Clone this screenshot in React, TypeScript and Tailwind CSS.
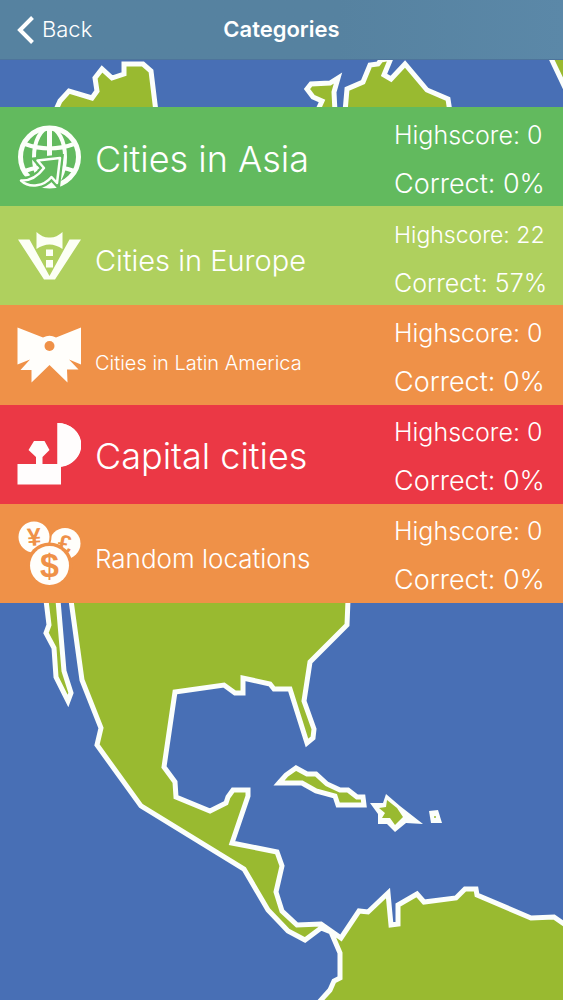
import type { ReactNode } from "react";

function WorldMap() {
  return (
    <svg
      className="absolute inset-0 h-full w-full"
      viewBox="0 0 563 1000"
      preserveAspectRatio="xMidYMin slice"
      aria-hidden="true"
    >
      <rect width="563" height="1000" fill="#486fb5" />
      <g fill="#99ba30" stroke="#fbfefb" strokeWidth="5">
        <path d="M55 112 60 101 69 91 92 98 97 91 95 78 102 69 112 78 124 74V64H143L151 71 156 112Z" />
        <path d="M317 112 322 101 313 97 307 89 311 84 330 83 338 78 334 92 335 112Z" />
        <path d="M345 112 347 89 363 82 370 65 378 64 381 60 391 58 384 75 391 79 405 64 427 90 448 99 450 112Z" />
        <path d="M549 54 570 98V50Z" />
        <path d="M46 600 49 625 46 633 54 648 56 677 68 701 71 693 64 671 58 600Z" />
        <path d="M340 953 331 932 321 928 305 940 288 931 268 910 244 869 141 806 97 745 101 728 82 680 71 600H348L347 625 310 662 304 701 314 729 313 738 307 743 290 689H274L270 684 243 678V693H235L224 685 175 692 164 767 175 782 176 797 210 811 226 803 228 797 233 790H248V796L232 843 277 852 282 866 276 892 282 911 297 925 321 924 341 938 359 911 368 912 388 893 391 925 398 924V905L417 894 424 902 456 898 465 889H476L477 895 531 918 554 917 570 928V1010H312L330 990 334 981 340 978Z" />
        <path d="M279 783 286 775 296 768 307 774H316L327 784 340 790H348L357 797H363L364 805H338L335 796 316 791 302 783Z" />
      </g>
      <path d="M370 803H383L386 794 400 806 423 824 406 823 395 832 387 824H378V814Z" fill="#fbfefb" />
      <path d="M387 800 397 808 403 817 395 825 390 818H382L385 813 379 808 386 807Z" fill="#99ba30" />
      <path d="M429 811 438 810 442 823H431Z" fill="#fbfefb" />
      <circle cx="435" cy="817" r="1" fill="#99ba30" />
    </svg>
  );
}

const iconClass = "size-16 shrink-0";

function GlobeIcon() {
  return (
    <svg className={iconClass} viewBox="0 0 64 64" aria-hidden="true">
      <g fill="none" stroke="#fcfffa" strokeWidth="4">
        <circle cx="32.5" cy="32" r="29" strokeWidth="5" />
        <path d="M32.5 3V60" strokeWidth="5" />
        <ellipse cx="32.5" cy="32" rx="15.5" ry="29" />
        <path d="M8 19Q32.5 28 57 19M8 46Q32.5 37 57 46" />
      </g>
      <path
        d="M20.500 35.500 43 33 40 58 34.500 52C27 61 13 64 4 55.500 13 56 21 51 27 43Z"
        fill="#62ba5e"
        stroke="#62ba5e"
        strokeWidth="7"
      />
      <path
        d="M20.500 35.500 43 33 40 58 34.500 52C27 61 13 64 4 55.500 13 56 21 51 27 43Z"
        fill="#62ba5e"
        stroke="#fcfffa"
        strokeWidth="2.500"
        strokeLinejoin="round"
      />
    </svg>
  );
}

function TuxedoIcon() {
  return (
    <svg className={iconClass} viewBox="0 0 64 64" fill="#fcfff4" aria-hidden="true">
      <path d="M1 15.500H12.500L32.500 52 52.500 15.500H64L38 55.500H27Z" />
      <path d="M19.500 8Q26 14 32.500 13.500 39 14 45.500 8V25Q39 20.500 32.500 20.500 26 20.500 19.500 25Z" />
      <path d="M29 25.500H36V32H29ZM29 36H36V43.500H29Z" />
    </svg>
  );
}

function BowIcon() {
  return (
    <svg className={iconClass} viewBox="0 0 64 64" fill="#fffefb" aria-hidden="true">
      <path d="M.5 4.500 26 14.500Q32.500 11 39 14.500L64 4.500V41.500L52 36.500 61.500 46.500H50L50.500 59.500 32.500 42 14.500 59.500V47H3.500L13 36.500.5 41.500Z" />
      <circle cx="32.500" cy="23" r="5" fill="#ef9148" />
    </svg>
  );
}

function StampIcon() {
  return (
    <svg className={iconClass} viewBox="0 0 64 64" fill="#fffdfd" aria-hidden="true">
      <path d="M.5 42H19V35L11.500 28 17 19H27.500L32.500 28 25.500 35V42H40.500V1A23.500 22 0 0 1 44 44.800V62.500H.5Z" />
      <path d="M40.500 1A23.500 22 0 0 1 40.500 45Z" />
    </svg>
  );
}

function CoinsIcon() {
  return (
    <svg
      className={iconClass}
      viewBox="0 0 64 64"
      fontFamily="'Liberation Sans', sans-serif"
      fontWeight="700"
      textAnchor="middle"
      aria-hidden="true"
    >
      <circle cx="48" cy="22.500" r="15.500" fill="#fffefb" />
      <text x="48" y="31.500" fontSize="25" fill="#ef9148" transform="rotate(10 48 22)">£</text>
      <circle cx="17" cy="16" r="17.500" fill="#ef9148" />
      <circle cx="17" cy="16" r="15.500" fill="#fffefb" />
      <text x="17" y="24.500" fontSize="25" fill="#ef9148" transform="rotate(-4 17 16)">¥</text>
      <circle cx="32.500" cy="44.500" r="23" fill="#ef9148" />
      <circle cx="32.500" cy="44.500" r="19.500" fill="#fffefb" />
      <text x="32.500" y="56" fontSize="34" fill="#ef9148">$</text>
    </svg>
  );
}

type Category = {
  name: string;
  nameSize: string;
  color: string;
  icon: ReactNode;
  highscore: number;
  scoreSize: string;
  correct: number;
  correctSize: string;
};

const categories: Category[] = [
  { name: "Cities in Asia", nameSize: "text-[36px]", color: "bg-[#62ba5e]", icon: <GlobeIcon />, highscore: 0, scoreSize: "text-[25px]", correct: 0, correctSize: "text-[27px]" },
  { name: "Cities in Europe", nameSize: "text-[29px]", color: "bg-[#afd05e]", icon: <TuxedoIcon />, highscore: 22, scoreSize: "text-[23px]", correct: 57, correctSize: "text-[25px]" },
  { name: "Cities in Latin America", nameSize: "text-[20px]", color: "bg-[#ef9148]", icon: <BowIcon />, highscore: 0, scoreSize: "text-[25px]", correct: 0, correctSize: "text-[27px]" },
  { name: "Capital cities", nameSize: "text-[36px]", color: "bg-[#eb3845]", icon: <StampIcon />, highscore: 0, scoreSize: "text-[25px]", correct: 0, correctSize: "text-[27px]" },
  { name: "Random locations", nameSize: "text-[26px]", color: "bg-[#ef9148]", icon: <CoinsIcon />, highscore: 0, scoreSize: "text-[25px]", correct: 0, correctSize: "text-[27px]" },
];

function CategoryRow({ category }: { category: Category }) {
  return (
    <li className="grid">
      <button
        type="button"
        className={`flex w-full items-center pr-4 pl-[17px] text-left font-[350] whitespace-nowrap text-white ${category.color}`}
      >
        {category.icon}
        <span className="ml-3.5 flex-1 pt-1 text-[36px] leading-[50px]">
          <span className={`leading-none ${category.nameSize}`}>{category.name}</span>
        </span>
        <span className="-mb-[3px] flex w-[153px] flex-col pt-[3px] text-[25px] leading-[49px]">
          <span>
            <span className={`leading-none ${category.scoreSize}`}>Highscore: {category.highscore}</span>
          </span>
          <span>
            <span className={`leading-none ${category.correctSize}`}>Correct: {category.correct}%</span>
          </span>
        </span>
      </button>
    </li>
  );
}

export default function App() {
  return (
    <div className="relative min-h-screen overflow-hidden bg-[#486fb5] font-['Inter',sans-serif]">
      <WorldMap />
      <div className="relative">
        <header className="grid h-[60px] grid-cols-[1fr_auto_1fr] items-center border-b border-[#4e749b] bg-linear-to-r from-[#5682a0] from-60% to-[#5b88a8] px-4 text-white">
          <button type="button" className="flex items-center gap-2 justify-self-start text-[22px] font-[350]">
            <svg className="h-7 w-[18px]" viewBox="0 0 18 28" fill="none" stroke="currentColor" strokeWidth="4" aria-hidden="true">
              <path d="M16.500 1.500 4 14 16.500 26.500" />
            </svg>
            Back
          </button>
          <h1 className="text-[22px] font-semibold">Categories</h1>
        </header>
        <ul className="mt-[47px] grid h-[496px] grid-rows-5">
          {categories.map((category) => (
            <CategoryRow key={category.name} category={category} />
          ))}
        </ul>
      </div>
    </div>
  );
}
